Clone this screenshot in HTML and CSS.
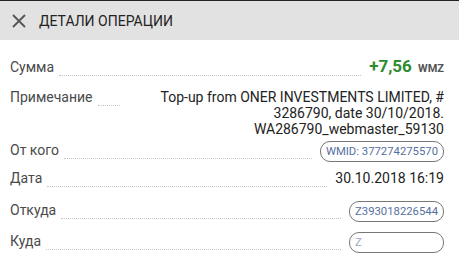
FILE: index.html
```html
<!DOCTYPE html>
<html lang="ru">
<head>
    <meta charset="UTF-8">
    <meta name="viewport" content="width=device-width, initial-scale=1.0">
    <title>Детали операции</title>
    <link rel="stylesheet" href="styles.css">
</head>
<body>
    <!-- Header -->
    <div class="header">
        <svg class="close" width="14" height="14" viewBox="0 0 14 14">
            <path d="M1 1 L13 13 M13 1 L1 13" stroke="#555" stroke-width="1.8" fill="none"/>
        </svg>
        <span class="title">ДЕТАЛИ ОПЕРАЦИИ</span>
    </div>

    <!-- Operation details -->
    <div class="details">
        <div class="row">
            <span class="label">Сумма</span>
            <span class="dots"></span>
            <span class="value amount">+7,56 <span class="currency">WMZ</span></span>
        </div>
        <div class="row">
            <span class="label">Примечание</span>
            <span class="dots"></span>
            <span class="value note">Top-up from ONER INVESTMENTS LIMITED, # 3286790, date 30/10/2018. WA286790_webmaster_59130</span>
        </div>
        <div class="row">
            <span class="label">От кого</span>
            <span class="dots"></span>
            <span class="value pill">WMID: 377274275570</span>
        </div>
        <div class="row">
            <span class="label">Дата</span>
            <span class="dots"></span>
            <span class="value">30.10.2018 16:19</span>
        </div>
        <div class="row">
            <span class="label">Откуда</span>
            <span class="dots"></span>
            <span class="value pill">Z393018226544</span>
        </div>
        <div class="row">
            <span class="label">Куда</span>
            <span class="dots"></span>
            <span class="value pill pill-faded">Z393018226544</span>
        </div>
    </div>
</body>
</html>
```

FILE: styles.css
```css
*, *::before, *::after {
    box-sizing: border-box;
}

body {
    margin: 0;
    font-family: Roboto, 'Noto Sans', sans-serif;
    background: #fff;
    color: #222;
    overflow: hidden;
}

.header {
    display: flex;
    align-items: center;
    height: 40px;
    padding: 0 12px;
    background: #e2e2e2;
    border-top: 1px solid #222;
}

.close {
    margin-right: 13px;
}

.title {
    font-size: 14px;
    color: #222;
}

.details {
    display: grid;
    grid-template-rows: 31px 52px 29px 31px 31px auto;
    padding: 18px 15px 0 10px;
}

.row {
    display: flex;
    align-items: baseline;
}

.label {
    font-size: 14px;
    line-height: 16px;
    color: #4a4a4a;
    margin-right: 5px;
}

.dots {
    flex: 1;
    min-width: 22px;
    font-size: 14px;
    line-height: 16px;
    border-bottom: 1px dotted #c4c4c4;
}

.dots::before {
    content: "\00a0";
}

.value {
    font-size: 14px;
    line-height: 16px;
    margin-left: 8px;
    text-align: right;
    color: #222;
}

.note {
    max-width: 320px;
}

.amount {
    font-size: 17px;
    font-weight: bold;
    color: #2e8b2e;
}

.currency {
    font-size: 11px;
    color: #555;
    margin-left: 2px;
}

.pill {
    font-size: 11.3px;
    line-height: 13px;
    padding: 3px 5px;
    border: 1px solid #777;
    border-radius: 10px;
    color: #5570a0;
}

.pill-faded {
    color: transparent;
    width: 95px;
    overflow: hidden;
    white-space: nowrap;
    position: relative;
}

.pill-faded::before {
    content: "Z";
    position: absolute;
    left: 5px;
    color: #9aa8c4;
}
```
